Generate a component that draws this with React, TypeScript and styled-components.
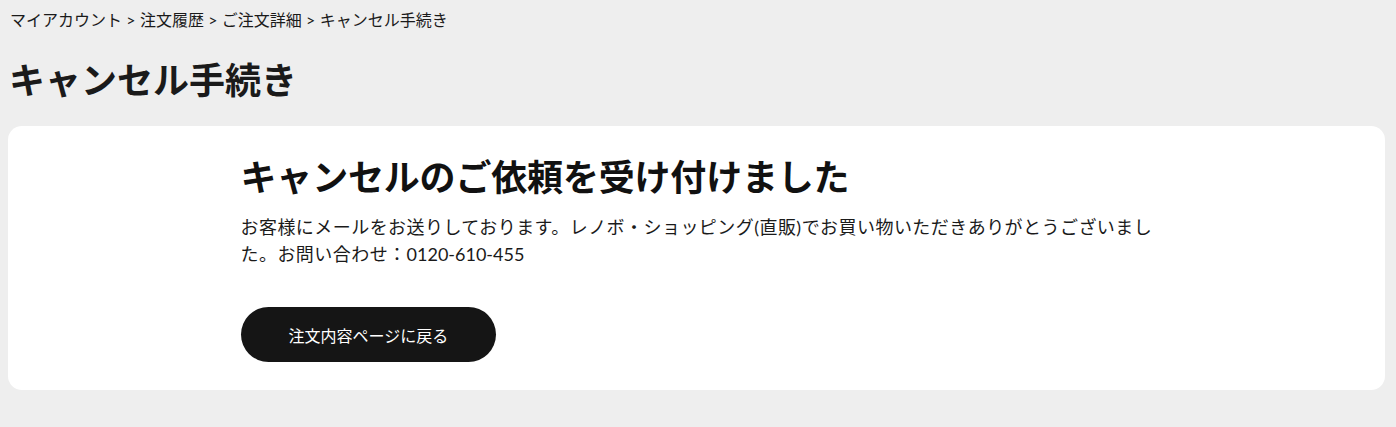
import styled, { createGlobalStyle } from 'styled-components'

const GlobalStyle = createGlobalStyle`
	html, body {
		margin: 0;
		padding: 0;
		background: #eeeeee;
	}
	body {
		font-family: 'Lato', 'Noto Sans CJK JP', sans-serif;
		color: #1a1a1a;
	}
`

const Page = styled.div`
	min-height: 427px;
	box-sizing: border-box;
	padding: 8px 11px 0 8px;
	background: #eeeeee;
`

const Breadcrumb = styled.nav`
	display: flex;
	align-items: center;
	font-size: 16px;
	line-height: 24px;
	padding-left: 2px;
`

const Crumb = styled.span`
	color: #1a1a1a;
`

const Separator = styled.span`
	padding: 0 4.3px;
`

const PageTitle = styled.h1`
	margin: 21px 0 19px;
	padding-left: 1px;
	font-size: 36px;
	line-height: 54px;
	font-weight: 700;
	color: #1a1a1a;
`

const Card = styled.section`
	background: #ffffff;
	border-radius: 14px;
	padding: 24px 0 28px;
`

const Content = styled.div`
	max-width: 912px;
	margin: 0 auto;
`

const Heading = styled.h2`
	margin: 0 0 10px;
	font-size: 36px;
	line-height: 54px;
	font-weight: 700;
	letter-spacing: -0.005em;
	color: #111;
`

const Message = styled.p`
	margin: 0 0 39px;
	font-size: 18px;
	line-height: 27px;
	letter-spacing: 0.025em;
	color: #1a1a1a;
`

const Phone = styled.span`
	letter-spacing: 0;
`

const BackButton = styled.button`
	display: block;
	height: 55px;
	padding: 0 48px;
	border: none;
	border-radius: 28px;
	background: #151515;
	color: #ffffff;
	font-family: inherit;
	font-size: 16px;
	cursor: pointer;
`

const crumbs = ['マイアカウント', '注文履歴', 'ご注文詳細', 'キャンセル手続き']

export default function App() {
	return (
		<Page>
			<GlobalStyle />
			<Breadcrumb>
				{crumbs.map((c, i) => (
					<span key={c}>
						<Crumb>{c}</Crumb>
						{i < crumbs.length - 1 && <Separator>&gt;</Separator>}
					</span>
				))}
			</Breadcrumb>
			<PageTitle>キャンセル手続き</PageTitle>
			<Card>
				<Content>
					<Heading>キャンセルのご依頼を受け付けました</Heading>
					<Message>
						お客様にメールをお送りしております。レノボ・ショッピング(直販)でお買い物いただきありがとうございました。お問い合わせ：<Phone>0120-610-455</Phone>
					</Message>
					<BackButton>注文内容ページに戻る</BackButton>
				</Content>
			</Card>
		</Page>
	)
}
